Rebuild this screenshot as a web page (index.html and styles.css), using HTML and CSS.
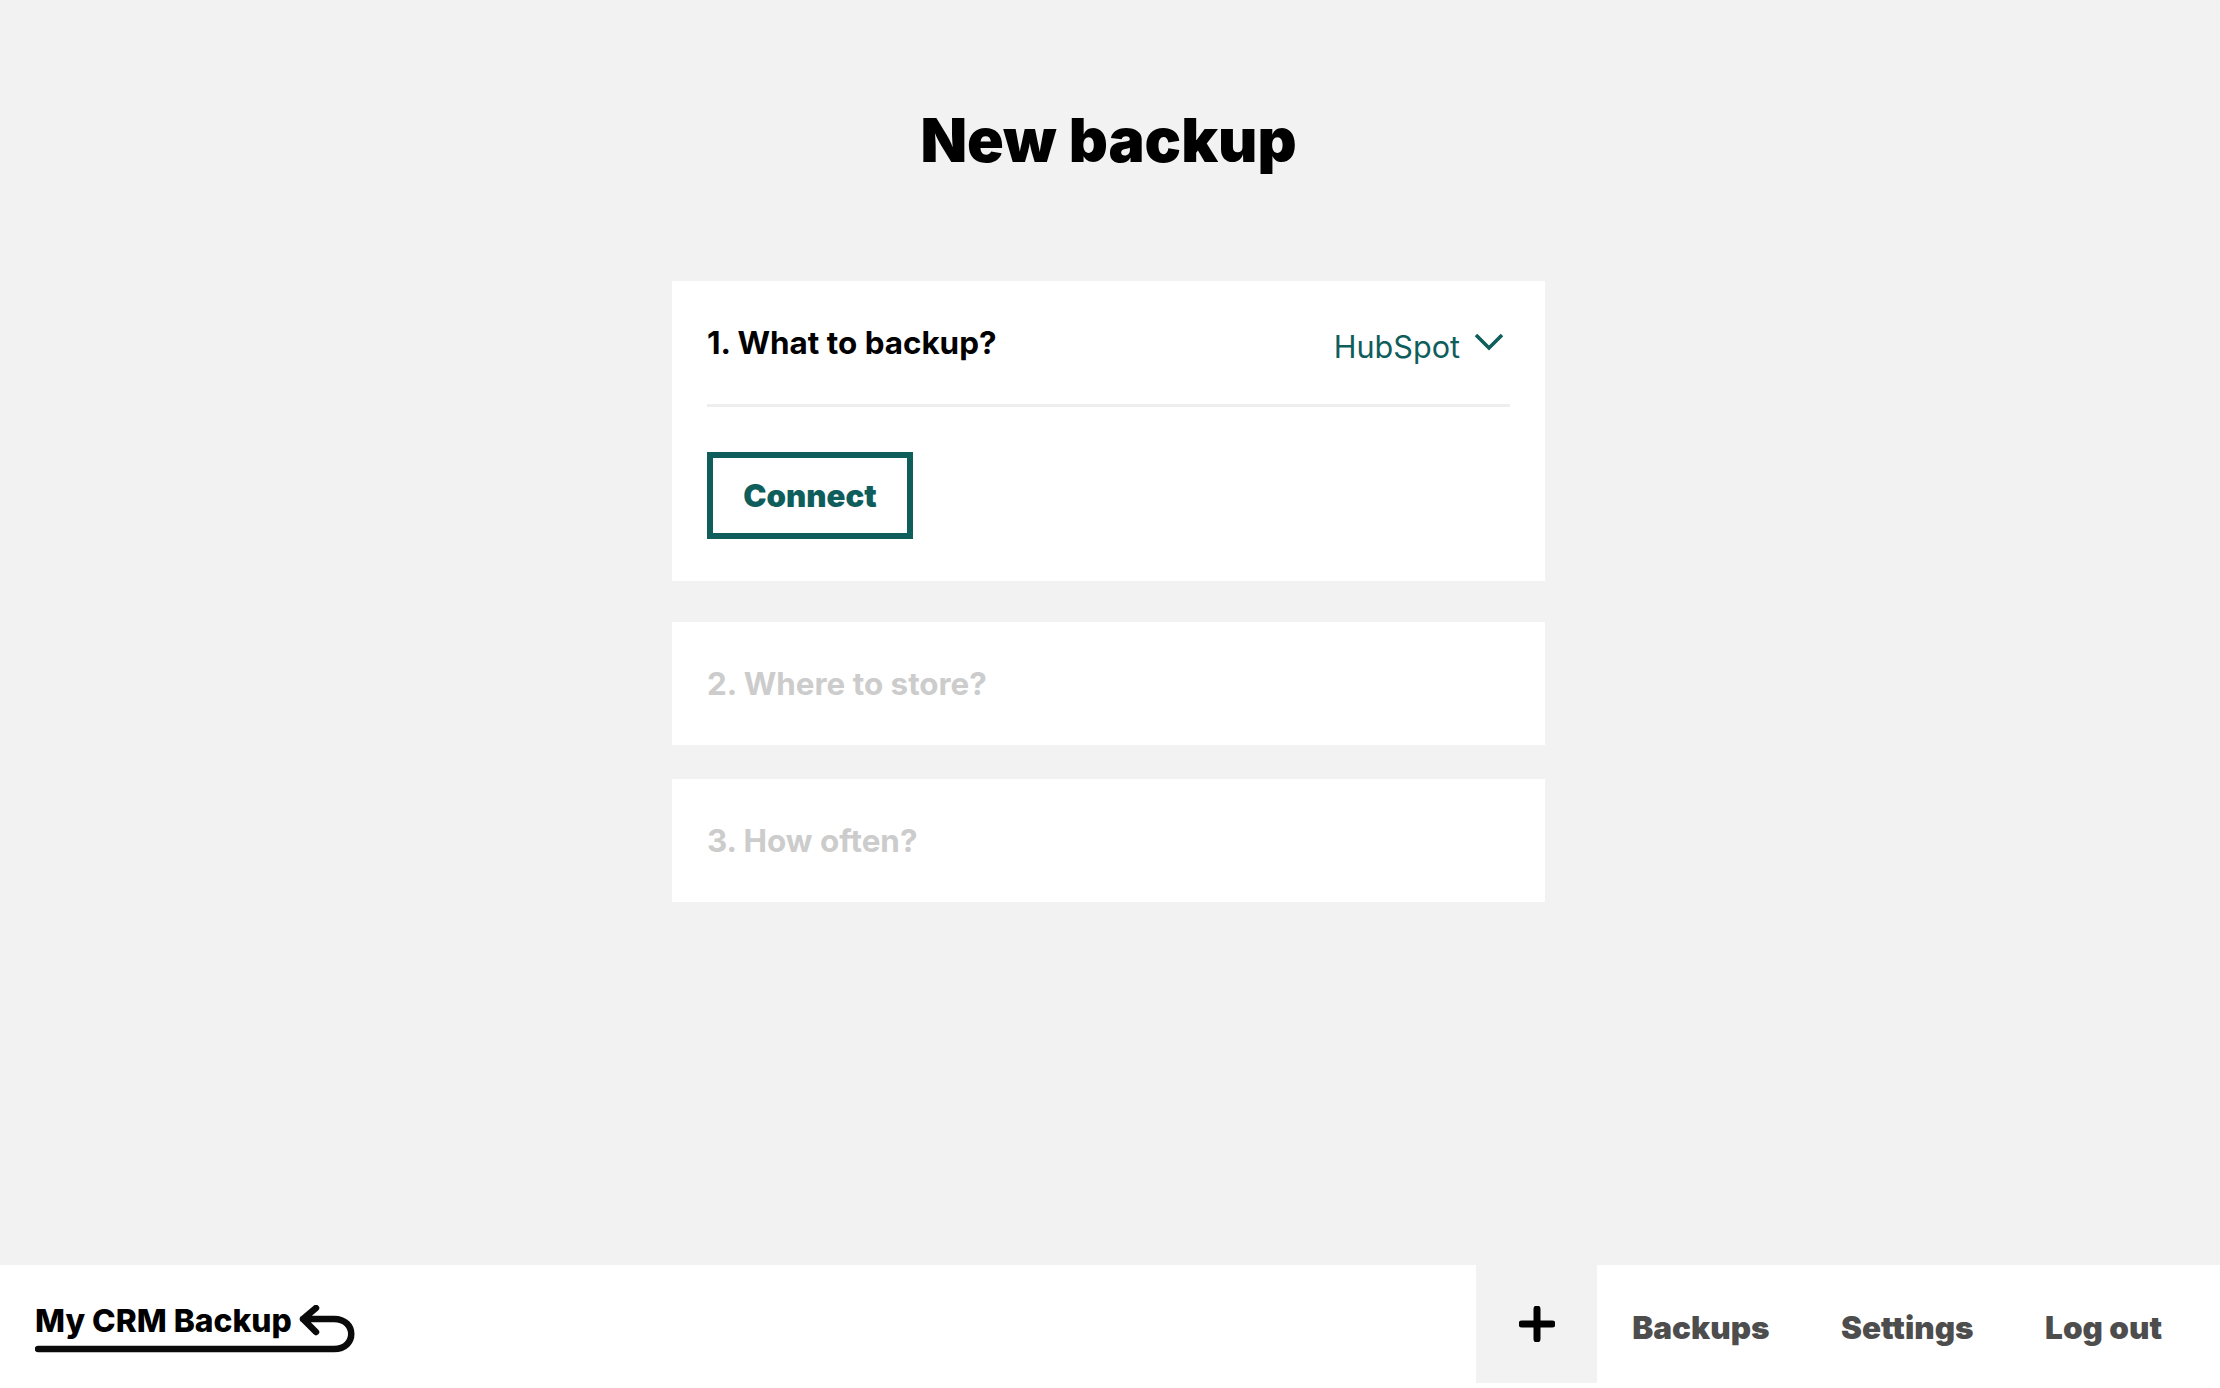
FILE: index.html
```html
<!DOCTYPE html>
<html lang="en">
<head>
  <meta charset="UTF-8">
  <meta name="viewport" content="width=device-width, initial-scale=1.0">
  <title>New backup</title>
  <link rel="stylesheet" href="styles.css">
</head>
<body>

  <main class="content">
    <h1 class="page-title">New backup</h1>

    <section class="card card-open">
      <div class="card-head">
        <h2 class="step">1. What to backup?</h2>
        <div class="select">
          <span>HubSpot</span>
          <svg class="chevron" width="30" height="18" viewBox="0 0 30 18" fill="none">
            <path d="M2 2 L15 15 L28 2" stroke="#0f5e5c" stroke-width="3.6"/>
          </svg>
        </div>
      </div>
      <div class="card-body">
        <button class="btn-connect">Connect</button>
      </div>
    </section>

    <section class="card card-closed">
      <h2 class="step step-off">2. Where to store?</h2>
    </section>

    <section class="card card-closed card-last">
      <h2 class="step step-off">3. How often?</h2>
    </section>
  </main>

  <footer class="footer">
    <div class="logo">
      <span class="logo-text">My CRM Backup</span>
      <svg class="logo-mark" width="320" height="50" viewBox="0 0 320 50" fill="none">
        <path d="M3 44 H299 C322 44 322 14 299 14 H268 M281 3 L268 14 L281 27" stroke="#0a0a0a" stroke-width="6.5" stroke-linecap="round" stroke-linejoin="round"/>
      </svg>
    </div>
    <nav class="nav">
      <a class="nav-add" href="#" aria-label="New backup">
        <svg width="36" height="36" viewBox="0 0 36 36" fill="none">
          <path d="M18 3 V33 M3 18 H33" stroke="#000" stroke-width="7" stroke-linecap="round"/>
        </svg>
      </a>
      <a class="nav-link" href="#">Backups</a>
      <a class="nav-link" href="#">Settings</a>
      <a class="nav-link" href="#">Log out</a>
    </nav>
  </footer>

</body>
</html>
```

FILE: styles.css
```css
* {
  box-sizing: border-box;
}

html, body {
  height: 100%;
}

body {
  margin: 0;
  background-color: #fff;
  font-family: 'Inter', sans-serif;
  color: #000;
  display: flex;
  flex-direction: column;
}

.content {
  flex: 1;
  display: flex;
  flex-direction: column;
  align-items: center;
  background-color: #f2f2f2;
  padding-right: 3px;
}

.page-title {
  margin: 103px 0 0;
  font-size: 60.7px;
  line-height: 75px;
  font-weight: 900;
}

.card {
  width: 873px;
  background-color: #fff;
  padding: 0 35px;
}

.card-open {
  margin-top: 103px;
  height: 300px;
}

.card-head {
  height: 126px;
  border-bottom: 3px solid #eee;
  display: flex;
  justify-content: space-between;
  align-items: center;
}

.step {
  margin: 0;
  font-size: 31.4px;
  line-height: 36px;
  font-weight: 700;
}

.step-off {
  color: #ccc;
}

.select {
  display: flex;
  align-items: center;
  gap: 14px;
  font-size: 30.6px;
  line-height: 36px;
  color: #0f5e5c;
  padding-right: 6px;
}

.select span {
  padding-top: 8px;
}

.chevron {
  margin-top: 1px;
  margin-bottom: 2px;
}

.card-body {
  padding-top: 45px;
}

.btn-connect {
  width: 206px;
  height: 87px;
  background-color: #fff;
  border: 6px solid #0f5e5c;
  border-radius: 0;
  color: #0f5e5c;
  font-family: 'Inter', sans-serif;
  font-size: 31.2px;
  font-weight: 900;
  padding: 0;
  cursor: pointer;
}

.card-closed {
  height: 123px;
  display: flex;
  align-items: center;
  margin-top: 41px;
}

.card-last {
  margin-top: 34px;
}

.footer {
  height: 118px;
  margin-bottom: 5px;
  background-color: #fff;
  display: flex;
  justify-content: space-between;
  padding-right: 3px;
}

.logo {
  position: relative;
  margin-left: 35px;
  padding-top: 36px;
}

.logo-text {
  font-size: 31.8px;
  line-height: 40px;
  font-weight: 800;
}

.logo-mark {
  position: absolute;
  left: 0;
  top: 40px;
}

.nav {
  display: flex;
  align-items: center;
  height: 100%;
}

.nav-add {
  width: 121px;
  height: 100%;
  background-color: #f2f2f2;
  display: flex;
  align-items: center;
  justify-content: center;
  margin-right: 35px;
}

.nav-link {
  color: #4d4d4d;
  font-size: 31.5px;
  font-weight: 900;
  text-decoration: none;
  margin-right: 71.5px;
  padding-top: 6px;
}

.nav-link:last-child {
  margin-right: 55px;
}
```
